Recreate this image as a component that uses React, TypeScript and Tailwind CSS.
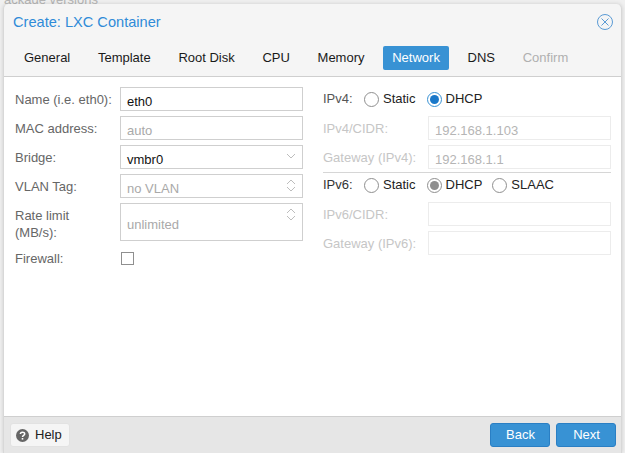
const font = { fontFamily: '"Liberation Sans", Arial, sans-serif' };

function Chevron({ up }: { up?: boolean }) {
  return (
    <svg width="14" height="7" viewBox="0 0 14 7" fill="none" stroke="#bdbdbd" strokeWidth="1">
      <path d={up ? "M3 6 L7 2 L11 6" : "M3 1 L7 5 L11 1"} />
    </svg>
  );
}

function Field({ value, muted, h = "h-6", kind }: { value?: string; muted?: boolean; h?: string; kind?: "combo" | "spin" }) {
  return (
    <div className={`${h} w-[183px] shrink-0 bg-white border border-[#cfcfcf] flex items-center pl-[6px] pt-[5px] relative`}>
      <span className={`text-[13px] ${muted ? "text-[#a9a9a9]" : "text-[#111]"}`}>{value}</span>
      {kind === "combo" && (
        <div className="absolute right-[4px] top-[7px]">
          <Chevron />
        </div>
      )}
      {kind === "spin" && (
        <div className="absolute right-[4px] top-[3px] flex flex-col gap-[1px]">
          <Chevron up />
          <Chevron />
        </div>
      )}
    </div>
  );
}

function Row({ name, children, tall }: { name: React.ReactNode; children: React.ReactNode; tall?: boolean }) {
  return (
    <div className={`flex ${tall ? "" : "items-center h-6"}`}>
      <div className="w-[105px] shrink-0 text-[13px] text-[#666] leading-[17px]">{name}</div>
      {children}
    </div>
  );
}

function Radio({ text, state }: { text: string; state?: "blue" | "gray" }) {
  return (
    <div className="flex items-center gap-[4px]">
      <div
        className={`w-[15px] h-[15px] rounded-full bg-white border flex items-center justify-center ${
          state === "blue" ? "border-[#3892d4]" : "border-[#8f8f8f]"
        }`}
      >
        {state && <div className={`w-[9px] h-[9px] rounded-full ${state === "blue" ? "bg-[#1a78c9]" : "bg-[#8f8f8f]"}`} />}
      </div>
      <span className="text-[13px] text-[#222]">{text}</span>
    </div>
  );
}

function DisabledRow({ name, value }: { name: string; value?: string }) {
  return (
    <div className="flex items-center h-6">
      <div className="w-[105px] shrink-0 text-[13px] text-[#c6c6c6] pt-[2px]">{name}</div>
      <div className="w-[183px] h-6 border border-[#ececec] flex items-center pl-[6px] pt-[5px]">
        <span className="text-[13px] text-[#b5b5b5]">{value}</span>
      </div>
    </div>
  );
}

const tabs = ["General", "Template", "Root Disk", "CPU", "Memory", "Network", "DNS", "Confirm"];

export default function App() {
  return (
    <div className="w-[625px] h-[453px] bg-[#f0f0f0] overflow-hidden relative" style={font}>
      {/* page behind the dialog, only the bottom of one line shows */}
      <div className="absolute left-[4px] top-[-10px] text-[13px] text-[#b5b5b5] whitespace-nowrap">ackage versions</div>
      <div className="absolute left-[3px] top-[4px] w-[619px] h-[449px] bg-[#f5f5f5] rounded-t-[5px] border-x border-[#d8d8d8] flex flex-col shadow-[0_0_4px_rgba(0,0,0,0.15)]">
        <div className="h-[36px] flex items-center justify-between pl-[9px] pr-[7px] shrink-0">
          <span className="text-[14.6px] text-[#2f8bd8] pt-[2px]">Create: LXC Container</span>
          <svg width="18" height="18" viewBox="0 0 18 18" fill="none" stroke="#5b9bd5" strokeWidth="1">
            <circle cx="9" cy="9" r="7.5" />
            <path d="M5.5 5.5 L12.5 12.5 M12.5 5.5 L5.5 12.5" />
          </svg>
        </div>
        <div className="h-[36px] flex items-center pl-[10.5px] gap-[8.7px] shrink-0">
          {tabs.map((t) => (
            <div
              key={t}
              className={`h-6 px-[9.5px] flex items-center text-[13px] rounded-[2px] ${
                t === "Network" ? "bg-[#3892d4] text-white" : t === "Confirm" ? "text-[#b0b0b0]" : "text-[#1a1a1a]"
              }`}
            >
              {t}
            </div>
          ))}
        </div>
        <div className="flex-1 bg-white border-y border-[#cfcfcf] flex pt-[10px] pl-[11px]">
          <div className="w-[288px] flex flex-col gap-[5px] shrink-0">
            <Row name="Name (i.e. eth0):">
              <Field value="eth0" />
            </Row>
            <Row name="MAC address:">
              <Field value="auto" muted />
            </Row>
            <Row name="Bridge:">
              <Field value="vmbr0" kind="combo" />
            </Row>
            <Row name="VLAN Tag:">
              <Field value="no VLAN" muted kind="spin" />
            </Row>
            <Row
              tall
              name={
                <div className="pt-[4px]">
                  Rate limit
                  <br />
                  (MB/s):
                </div>
              }
            >
              <Field value="unlimited" muted h="h-[38px]" kind="spin" />
            </Row>
            <Row name="Firewall:">
              <div className="w-[13px] h-[13px] ml-[1px] border border-[#8f8f8f] bg-white" />
            </Row>
          </div>
          <div className="ml-[20px] w-[288px] flex flex-col">
            <div className="flex items-center h-6">
              <span className="text-[13px] text-[#555] w-[41px]">IPv4:</span>
              <div className="flex items-center gap-[11px]">
                <Radio text="Static" />
                <Radio text="DHCP" state="blue" />
              </div>
            </div>
            <div className="mt-[5px] flex flex-col gap-[5px]">
              <DisabledRow name="IPv4/CIDR:" value="192.168.1.103" />
              <DisabledRow name="Gateway (IPv4):" value="192.168.1.1" />
            </div>
            <div className="mt-[3px] border-t border-[#d6d6d6]" />
            <div className="flex items-center h-6">
              <span className="text-[13px] text-[#333] w-[41px]">IPv6:</span>
              <div className="flex items-center gap-[11px]">
                <Radio text="Static" />
                <Radio text="DHCP" state="gray" />
                <div className="-ml-[1px]">
                  <Radio text="SLAAC" />
                </div>
              </div>
            </div>
            <div className="mt-[5px] flex flex-col gap-[5px]">
              <DisabledRow name="IPv6/CIDR:" />
              <DisabledRow name="Gateway (IPv6):" />
            </div>
          </div>
        </div>
        <div className="h-[36px] bg-[#e6e6e6] flex items-center justify-between pl-[6px] pr-[5px] shrink-0">
          <div className="h-6 w-[60px] bg-[#f5f5f5] border border-[#e2e2e2] rounded-[3px] flex items-center gap-[6px] pl-[5px]">
            <svg width="13" height="13" viewBox="0 0 13 13">
              <circle cx="6.5" cy="6.5" r="6.5" fill="#666" />
              <path d="M4.4 5 C4.4 2.6 8.7 2.6 8.7 5 C8.7 6.4 6.5 6.3 6.5 7.9" fill="none" stroke="#fff" strokeWidth="1.5" />
              <rect x="5.7" y="9" width="1.6" height="1.6" fill="#fff" />
            </svg>
            <span className="text-[13px] text-[#222]">Help</span>
          </div>
          <div className="flex gap-[6px]">
            <div className="h-6 w-[60px] pl-[1px] bg-[#3892d4] border border-[#2a7fc4] rounded-[3px] flex items-center justify-center text-[13px] text-white">Back</div>
            <div className="h-6 w-[60px] pl-[1px] bg-[#3892d4] border border-[#2a7fc4] rounded-[3px] flex items-center justify-center text-[13px] text-white">Next</div>
          </div>
        </div>
      </div>
    </div>
  );
}
